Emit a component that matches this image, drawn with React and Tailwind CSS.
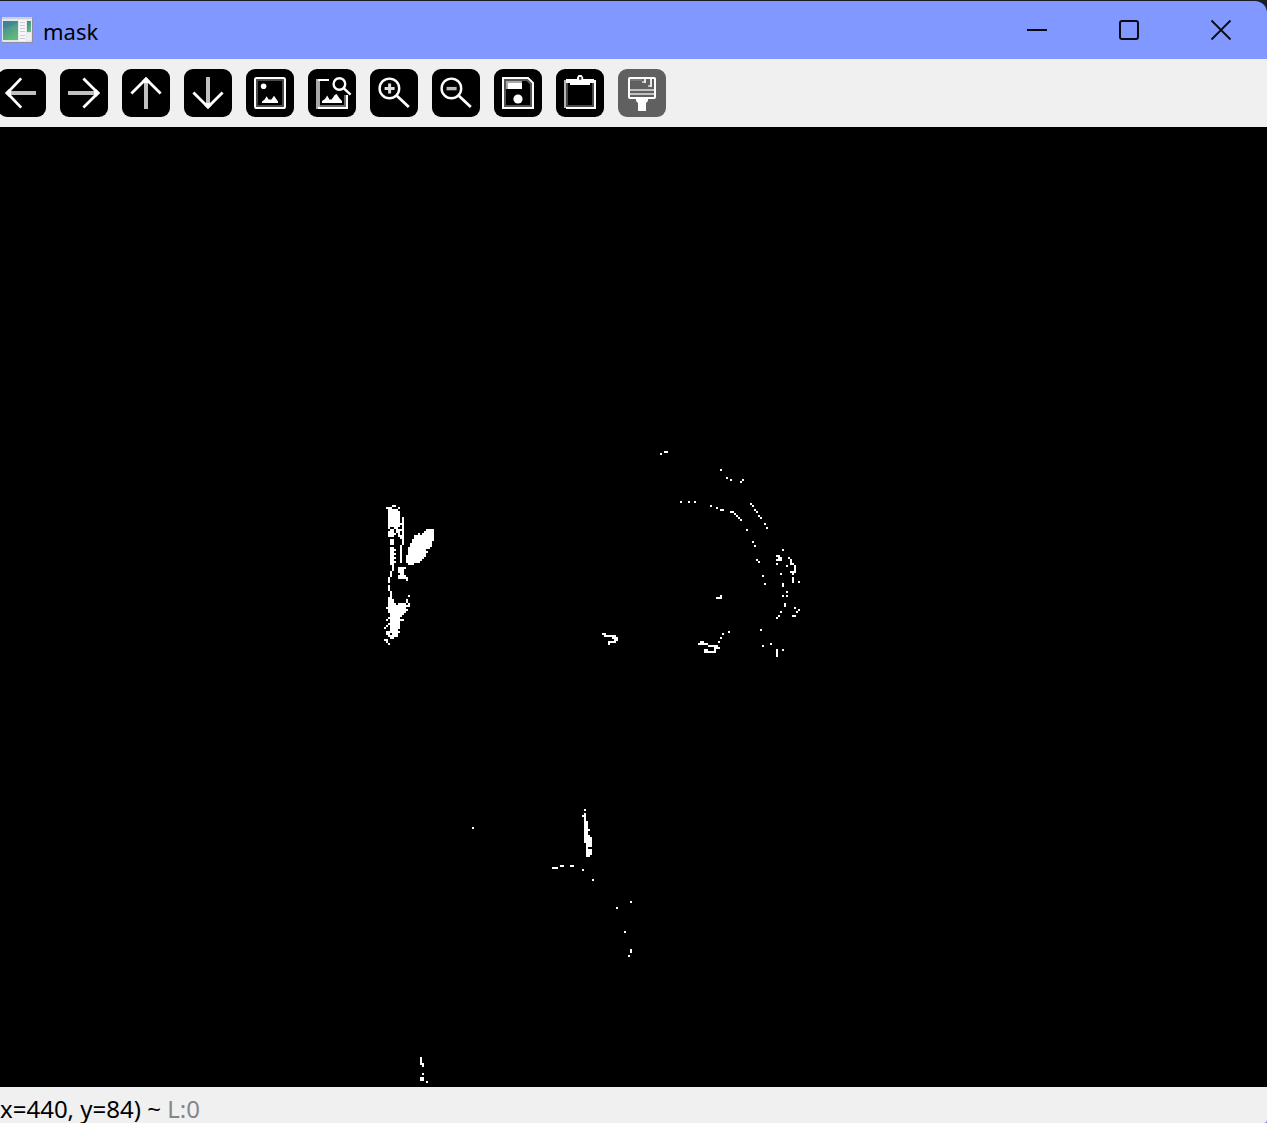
import React from "react";

// Lit pixels of the mask, as [x, y, width, height] on a 640x480 grid.
const LIT = [
  // top right arc
  [330,163,1,1],[332,162,2,1],[360,171,1,1],[363,175,1,1],[365,176,1,1],[370,177,1,1],[371,176,1,1],
  [340,187,1,1],[344,187,1,1],[347,187,1,1],[355,189,1,1],[358,190,1,1],[360,191,2,1],[365,192,2,1],
  [367,193,1,1],[368,194,1,1],[369,195,1,1],[370,196,1,1],[373,201,1,1],[376,207,1,1],[377,209,1,1],
  [375,188,1,1],[376,189,1,1],[377,191,1,1],[378,192,1,1],[379,194,1,1],[380,195,1,1],[382,198,1,1],[383,200,1,1],
  [378,216,1,1],[379,217,1,1],[381,224,1,1],[382,228,1,1],
  // right cluster
  [391,211,1,1],[388,214,2,1],[389,215,2,1],[388,216,3,1],[388,218,1,1],[393,219,1,1],[390,223,1,1],
  [394,215,1,1],[395,216,1,3],[395,218,2,1],[397,219,1,3],[395,222,3,1],[396,223,1,1],[396,225,1,3],
  [399,227,1,1],[391,228,1,2],[393,232,1,1],[391,234,1,1],[393,234,1,1],[392,238,1,2],[397,240,1,1],
  [399,241,1,1],[398,242,1,1],[390,242,1,1],[396,244,2,1],[389,244,1,1],[388,245,1,1],
  [380,251,1,1],[381,259,1,1],[385,258,1,1],[388,261,1,4],[391,261,1,1],
  // lower middle
  [358,235,3,1],[360,234,1,1],[364,252,1,1],[361,253,1,1],[360,255,1,1],[359,257,1,1],
  [350,257,2,1],[349,258,5,1],[354,259,5,1],[357,260,3,1],[352,261,2,1],[357,261,1,1],[352,262,6,1],
  [301,253,2,1],[302,254,6,1],[306,255,3,1],[307,256,2,1],[304,257,4,1],[304,258,1,1],
  // bottom strokes
  [236,350,1,1],[292,341,1,1],[291,344,1,1],[292,343,1,4],[292,347,2,7],[294,351,1,1],[292,354,3,1],
  [292,355,4,3],[293,358,3,2],[293,360,1,1],[293,361,3,3],[293,364,2,1],
  [276,370,3,1],[280,369,2,1],[285,369,2,1],[291,371,1,1],[296,376,1,1],[315,387,1,1],[308,390,1,1],
  [312,402,1,1],[315,411,1,2],[314,414,1,1],
  [210,465,1,4],[211,468,1,2],[211,473,1,1],[210,475,2,2],[213,477,1,1],
  // leaf
  [213,201,4,1],[212,202,5,1],[209,203,1,1],[211,203,6,1],[207,204,10,1],[207,205,10,1],[206,206,11,1],
  [206,207,10,1],[205,208,11,2],[204,210,11,1],[204,211,9,1],[204,212,10,1],[204,213,9,1],[203,214,10,1],
  [203,215,9,1],[203,216,8,1],[203,217,7,1],[204,218,3,1],
  // stem, upper
  [196,189,2,1],[193,190,3,1],[199,190,1,1],[194,191,5,1],[194,192,6,8],[201,195,1,14],[200,198,1,1],
  [194,200,1,1],[197,200,2,1],[195,201,2,1],[198,201,3,1],[194,202,3,1],[198,202,2,1],[194,203,4,1],
  [199,203,1,1],[194,204,3,1],[199,204,2,1],[195,206,2,3],[200,205,1,1],[200,209,1,8],[196,210,1,12],
  [195,210,1,9],[197,211,1,1],[197,213,1,1],[197,215,1,1],[197,217,1,1],[200,217,1,1],[195,222,1,1],
  // stem, lower
  [199,220,4,1],[199,221,3,2],[200,223,2,1],[199,224,4,1],[199,225,5,1],[203,226,1,1],
  [195,223,1,2],[194,225,1,3],[194,229,1,3],[195,232,1,3],[194,235,2,1],[204,234,1,1],[203,236,1,2],
  [204,238,1,2],[194,236,3,2],[194,238,4,1],[199,238,4,1],[203,239,1,1],[194,239,9,1],[193,240,10,1],
  [194,241,10,1],[194,242,9,1],[195,243,7,1],[195,244,6,1],[194,245,6,1],[193,246,1,1],[195,246,7,1],
  [195,247,5,1],[194,248,6,1],[193,249,1,1],[195,249,5,1],[192,250,1,1],[195,250,5,1],[195,251,4,1],
  [193,252,2,1],[195,252,5,1],[193,253,2,1],[196,253,3,1],[194,254,5,1],[195,255,2,1],[192,256,2,1],
  [193,257,1,1],[194,258,1,1],
];

function ImageView() {
  return (
    <main className="min-h-0 flex-1 overflow-hidden bg-black">
      <svg
        role="img"
        aria-label="mask"
        width="1280"
        height="960"
        viewBox="0 0 640 480"
        shapeRendering="crispEdges"
        className="block max-w-none"
        fill="#fff"
      >
        {LIT.map(([x, y, w, h], i) => (
          <rect key={i} x={x} y={y} width={w} height={h} />
        ))}
      </svg>
    </main>
  );
}

const SHAFT = "#c0c0c0";

const TOOLS = [
  {
    label: "Pan left",
    art: (
      <>
        <path d="M6 12H19" stroke={SHAFT} strokeWidth="2" />
        <path d="M11.6 4.7L4.6 12L11.6 19.3" strokeWidth="1.4" />
        <path d="M3.500 12L5.500 10H6.500V14H5.500Z" fill="#fff" stroke="none" />
      </>
    ),
  },
  {
    label: "Pan right",
    art: (
      <>
        <path d="M4 12H18" stroke={SHAFT} strokeWidth="2" />
        <path d="M11.7 4.7L19 12L11.7 19.3" strokeWidth="1.4" />
        <path d="M20 12L18 10H17V14H18Z" fill="#fff" stroke="none" />
      </>
    ),
  },
  {
    label: "Pan up",
    art: (
      <>
        <path d="M12 6V20" stroke={SHAFT} strokeWidth="2" />
        <path d="M4.7 12.3L12 5L19.3 12.3" strokeWidth="1.4" />
        <path d="M12 4L10 6V7H14V6Z" fill="#fff" stroke="none" />
      </>
    ),
  },
  {
    label: "Pan down",
    art: (
      <>
        <path d="M12 4V18" stroke={SHAFT} strokeWidth="2" />
        <path d="M4.7 11.7L12 19L19.3 11.7" strokeWidth="1.4" />
        <path d="M12 20L10 18V17H14V18Z" fill="#fff" stroke="none" />
      </>
    ),
  },
  {
    label: "Original size",
    art: (
      <>
        <rect x="5.5" y="5.5" width="13" height="13" stroke="#4a4a4a" />
        <rect x="4.5" y="4.5" width="15" height="15" rx="0.8" />
        <circle cx="8.8" cy="8.6" r="1.4" fill="#fff" stroke="none" />
        <path d="M8 17V16.300L9.300 15.300L10.300 13.600L11.300 15.300H12.700L14 13.400L15.300 15.300L16 16.300V17Z" fill="#fff" stroke="none" />
      </>
    ),
  },
  {
    label: "Zoom to region",
    art: (
      <>
        <path d="M5 5V20" stroke="#a8a8a8" strokeWidth="2" />
        <path d="M6 18.5H19M18.5 13V19" stroke="#6a6a6a" />
        <path d="M5 5.5H10.5M5 19.5H19.5V13" />
        <circle cx="15.7" cy="7.5" r="2.9" strokeWidth="1.2" />
        <path d="M17.8 9.6L21.3 12.8" strokeWidth="1.2" />
        <path d="M7 17V16L8.500 15L9.600 13.300L10.700 15.200H11.800L13.400 13L14.300 12.500L15.600 14.500L17 16V17Z" fill="#fff" stroke="none" />
      </>
    ),
  },
  {
    label: "Zoom in",
    art: (
      <>
        <circle cx="9.7" cy="9.7" r="4.9" strokeWidth="1.2" />
        <path d="M13.4 13.4L19.4 19" strokeWidth="1.4" />
        <path d="M7.3 9.8H12.3M9.8 7.3V12.3" stroke="#ddd" strokeWidth="1.5" />
      </>
    ),
  },
  {
    label: "Zoom out",
    art: (
      <>
        <circle cx="9.7" cy="9.7" r="4.9" strokeWidth="1.2" />
        <path d="M13.4 13.4L19.4 19" strokeWidth="1.4" />
        <path d="M7.3 9.8H12.3" stroke="#bbb" strokeWidth="1.7" />
      </>
    ),
  },
  {
    label: "Save",
    art: (
      <>
        <path d="M5.5 5.5H16.5L18.5 7.5V18.5H5.5Z" stroke="#555" />
        <path d="M4.5 4.5H17L19.5 7V19.5H4.5Z" />
        <rect x="6" y="6" width="8" height="4" fill="#aaa" stroke="none" />
        <rect x="7" y="7" width="7" height="3" fill="#fff" stroke="none" />
        <circle cx="12" cy="15" r="2.3" fill="#fff" stroke="none" />
      </>
    ),
  },
  {
    label: "Copy to clipboard",
    art: (
      <>
        <path d="M5.5 7V18.5H18.5V7" stroke="#4a4a4a" />
        <path d="M4.5 5.5V19.5" stroke="#b5b5b5" />
        <path d="M5 19.5H19.5V5.5" />
        <path d="M5 5H10.5V4.2L11.3 3H12.8L13.6 4.2V5H19V7H17V8H7V7H5Z" fill="#fff" stroke="none" />
        <rect x="11.5" y="4" width="1.2" height="1.4" fill="#333" stroke="none" />
      </>
    ),
  },
  {
    label: "Display properties",
    muted: true,
    art: (
      <>
        <rect x="5.5" y="4.5" width="13" height="10" rx="0.4" />
        <path d="M6 10.5H18M6 12.5H18" stroke={SHAFT} />
        <path d="M6 5.5H12" stroke="#777" />
        <path d="M13.5 5V7M16.5 5V9" stroke="#e8e8e8" />
        <path d="M12 6.5H13M15 8.5H16" stroke={SHAFT} />
        <path d="M9 15H15V16L14 17V21H10V17L9 16Z" fill="#fff" stroke="none" />
      </>
    ),
  },
];

function Toolbar() {
  return (
    <div role="toolbar" aria-label="Image tools" className="-ml-0.5 flex h-17 shrink-0 items-center gap-3.5 bg-[#f0f0f0]">
      {TOOLS.map(({ label, art, muted }) => (
        <button
          key={label}
          type="button"
          aria-label={label}
          className={`size-12 shrink-0 rounded-[9px] ${muted ? "bg-[#606060]" : "bg-black"}`}
        >
          <svg viewBox="0 0 24 24" className="size-12" fill="none" stroke="#fff" strokeWidth="1">
            {art}
          </svg>
        </button>
      ))}
    </div>
  );
}

function AppIcon() {
  return (
    <svg width="32" height="28" viewBox="0 0 32 28" aria-hidden="true">
      <defs>
        <linearGradient id="pane" x1="0" y1="0" x2="0.5" y2="1">
          <stop offset="0" stopColor="#3f7f9c" />
          <stop offset="1" stopColor="#5fb97a" />
        </linearGradient>
      </defs>
      <rect x="1" y="2" width="31" height="25" rx="1" fill="#8b8fa5" />
      <rect x="1" y="1" width="30" height="25" rx="1" fill="#e4e6ea" />
      <rect x="1" y="1" width="30" height="2" fill="#cdd0d8" />
      <rect x="2" y="5" width="15" height="19" fill="url(#pane)" />
      <path d="M2 12Q11 11 17 6V5H2Z" fill="#3d7c98" opacity="0.5" />
      <rect x="18" y="4" width="7" height="21" fill="#f6f6f6" />
      <path d="M19 6.500H24M19 9.500H24M19 12.500H24M19 15.500H24M19 19.500H24M19 22.500H24" stroke="#c9ccd2" strokeWidth="1" />
      <rect x="26" y="5" width="4" height="11" fill="url(#pane)" />
      <rect x="26" y="17" width="4" height="7" fill="#f0f0f0" />
    </svg>
  );
}

const WINDOW_BUTTONS = [
  { label: "Minimize", art: <path d="M0 10H20" strokeWidth="2" shapeRendering="crispEdges" /> },
  { label: "Maximize", art: <rect x="1" y="1" width="18" height="18" rx="2" strokeWidth="2" /> },
  { label: "Close", art: <path d="M0.5 0.5L19.5 19.5M19.5 0.5L0.5 19.5" strokeWidth="1.8" /> },
];

function TitleBar() {
  return (
    <div className="shrink-0 bg-[#1b1d26] pt-px">
      <header className="flex h-14.5 items-stretch rounded-tr-xl bg-[#8098ff]">
        <div className="flex flex-1 items-center gap-2.5 pl-px text-[22px] text-black">
          <AppIcon />
          <h1 className="pt-0.5">mask</h1>
        </div>
        {WINDOW_BUTTONS.map(({ label, art }) => (
          <button key={label} type="button" aria-label={label} className="flex w-23 items-center justify-center">
            <svg width="20" height="20" viewBox="0 0 20 20" fill="none" stroke="#0a0a14" className="overflow-visible">
              {art}
            </svg>
          </button>
        ))}
      </header>
    </div>
  );
}

export default function App() {
  return (
    <div className="flex h-screen flex-col overflow-hidden bg-[#f0f0f0] font-['Noto_Sans','Open_Sans',sans-serif]">
      <TitleBar />
      <Toolbar />
      <ImageView />
      <footer className="shrink-0 bg-[#8098ff]">
        <p className="rounded-br-sm bg-[#f0f0f0] pt-2 text-2xl leading-7 whitespace-nowrap text-black">
          x=440, y=84) ~ <span className="text-[#858585]">L:0</span>
        </p>
      </footer>
    </div>
  );
}
